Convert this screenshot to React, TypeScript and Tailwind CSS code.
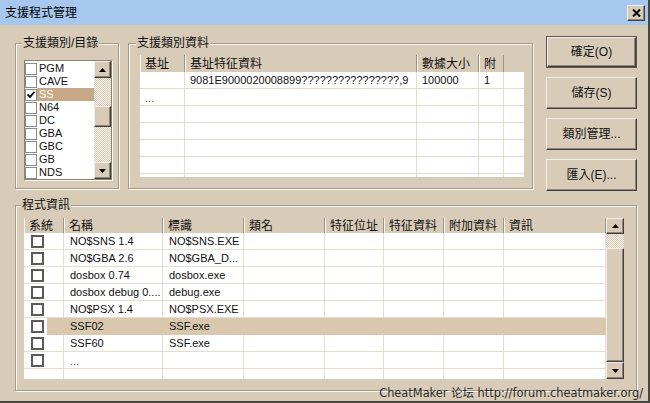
import React from "react";

const bevel =
  "bg-[#d8ccb8] border border-t-[#f4efe6] border-l-[#f4efe6] border-r-[#404040] border-b-[#404040] shadow-[inset_-1px_-1px_0_#8f8674]";
const checker =
  "bg-[image:repeating-conic-gradient(#f6f2ea_0_25%,#d8ccb8_0_50%)] bg-[length:2px_2px]";

const Arrow = ({ down }: { down?: boolean }) => (
  <svg width="7" height="4" viewBox="0 0 7 4">
    <path d={down ? "M0 0h7L3.5 4z" : "M3.5 0L7 4H0z"} fill="#000" />
  </svg>
);

const ScrollBtn = ({ down, h }: { down?: boolean; h: string }) => (
  <div className={`${h} shrink-0 flex items-center justify-center ${bevel}`}>
    <Arrow down={down} />
  </div>
);

const Group = ({
  title,
  className,
  legendClass,
  children,
}: {
  title: string;
  className: string;
  legendClass: string;
  children: React.ReactNode;
}) => (
  <fieldset
    className={`border border-[#a39a88] shadow-[inset_1px_1px_0_#fbf8f2,1px_1px_0_#fbf8f2] ${className}`}
  >
    <legend
      className={`px-[1px] text-[12px] leading-[15px] text-[#111] bg-[#d8ccb8] ${legendClass}`}
    >
      {title}
    </legend>
    {children}
  </fieldset>
);

const categories = ["PGM", "CAVE", "SS", "N64", "DC", "GBA", "GBC", "GB", "NDS"];

const t1Cols = ["w-[45px]", "w-[232px]", "w-[62px]", "w-[25px]", "flex-1"];
const t1Head = ["基址", "基址特征資料", "數據大小", "附", ""];
const t1Rows = [
  ["", "9081E9000020008899????????????????,9", "100000", "1", ""],
  ["...", "", "", "", ""],
  ["", "", "", "", ""],
  ["", "", "", "", ""],
  ["", "", "", "", ""],
  ["", "", "", "", ""],
];

const t2Cols = [
  "w-[40px]",
  "w-[99px]",
  "w-[81px]",
  "w-[81px]",
  "w-[59px]",
  "w-[60px]",
  "w-[60px]",
  "w-[102px]",
];
const t2Head = ["系統", "名稱", "標識", "類名", "特征位址", "特征資料", "附加資料", "資訊"];
const programs = [
  ["NO$SNS 1.4", "NO$SNS.EXE"],
  ["NO$GBA 2.6", "NO$GBA_D..."],
  ["dosbox 0.74", "dosbox.exe"],
  ["dosbox debug 0....", "debug.exe"],
  ["NO$PSX 1.4", "NO$PSX.EXE"],
  ["SSF02", "SSF.exe"],
  ["SSF60", "SSF.exe"],
  ["...", ""],
];

const HeadCell = ({ w, text, last }: { w: string; text: string; last?: boolean }) => (
  <div
    className={`${w} shrink-0 h-full flex items-center pl-[5px] text-[12px] ${
      last ? "" : "border-r border-[#9c9382] shadow-[inset_1px_0_0_#fbf8f2]"
    }`}
  >
    {text}
  </div>
);

export default function App() {
  return (
    <div className="w-[650px] h-[403px] bg-[#d8ccb8] relative overflow-hidden flex flex-col border-r-2 border-b-2 border-[#4a4640] font-['Liberation_Sans','Noto_Sans_CJK_TC',sans-serif] text-[#111]">
      {/* title bar */}
      <div className="h-[25px] shrink-0 bg-[#a7c8ee] flex items-center justify-between pl-[5px] pr-[3px]">
        <span className="text-[12px] text-black">支援程式管理</span>
        <div className={`w-[18px] h-[16px] flex items-center justify-center ${bevel}`}>
          <svg width="9" height="8" viewBox="0 0 9 8">
            <path d="M1 0.5L8 7.5M8 0.5L1 7.5" stroke="#000" strokeWidth="2" />
          </svg>
        </div>
      </div>

      <div className="flex-1 flex flex-col pl-[15px] pt-[11px]">
        <div className="flex items-start">
          {/* category list */}
          <Group title="支援類別/目錄" className="w-[104px] h-[153px]" legendClass="ml-[6px]">
            <div className="pl-[8px] pt-[9px]">
              <div className="w-[88px] h-[120px] bg-white border border-[#8b8270] shadow-[1px_1px_0_#fbf8f2] flex">
                <div className="flex-1 pt-[1px]">
                  {categories.map((c) => (
                    <div key={c} className="h-[13px] flex items-center">
                      <div className="w-[12px] h-[12px] border border-[#8a8a8a] bg-white flex items-center justify-center">
                        {c === "SS" && (
                          <svg width="8" height="7" viewBox="0 0 8 7">
                            <path d="M0.5 3.5L3 6L7.5 0.8" stroke="#000" strokeWidth="1.8" fill="none" />
                          </svg>
                        )}
                      </div>
                      <span
                        className={`flex-1 h-full flex items-center pl-[2px] text-[11px] ${
                          c === "SS" ? "bg-[#c8a886] text-white" : ""
                        }`}
                      >
                        {c}
                      </span>
                    </div>
                  ))}
                </div>
                <div className="w-[17px] flex flex-col">
                  <ScrollBtn h="h-[17px]" />
                  <div className={`h-[28px] ${checker}`} />
                  <div className={`h-[21px] ${bevel}`} />
                  <div className={`flex-1 ${checker}`} />
                  <ScrollBtn h="h-[17px]" down />
                </div>
              </div>
            </div>
          </Group>

          {/* category data */}
          <Group
            title="支援類別資料"
            className="ml-[9px] w-[405px] h-[153px]"
            legendClass="ml-[7px]"
          >
            <div className="pl-[11px] pt-[4px]">
              <div className="w-[384px] h-[122px] flex flex-col overflow-hidden">
                <div className="h-[17px] shrink-0 flex">
                  {t1Head.map((h, i) => (
                    <HeadCell key={i} w={t1Cols[i]} text={h} last={i >= 3 && h === ""} />
                  ))}
                </div>
                <div className="flex-1 bg-white">
                  {t1Rows.map((r, ri) => (
                    <div key={ri} className="h-[17px] flex">
                      {r.map((v, i) => (
                        <div
                          key={i}
                          className={`${t1Cols[i]} shrink-0 h-full flex items-center pl-[5px] text-[11px] border-b border-[#e2dccf] ${
                            i < 4 ? "border-r" : ""
                          } ${v === "..." ? "text-[#555] pt-[3px]" : ""}`}
                        >
                          {v}
                        </div>
                      ))}
                    </div>
                  ))}
                  <div className="h-[3px] flex">
                    {t1Cols.map((w, i) => (
                      <div key={i} className={`${w} shrink-0 ${i < 4 ? "border-r border-[#e2dccf]" : ""}`} />
                    ))}
                  </div>
                </div>
              </div>
            </div>
          </Group>

          {/* buttons */}
          <div className="ml-[13px] w-[91px] flex flex-col gap-[9px]">
            <div className="h-[32px] border border-[#5c574d] p-0">
              <div className={`h-full flex items-center justify-center text-[12px] ${bevel}`}>
                確定(O)
              </div>
            </div>
            {["儲存(S)", "類別管理...", "匯入(E)..."].map((b) => (
              <div key={b} className={`h-[32px] flex items-center justify-center text-[12px] ${bevel}`}>
                {b}
              </div>
            ))}
          </div>
        </div>

        {/* program info */}
        <Group title="程式資訊" className="mt-[7px] w-[622px] h-[193px]" legendClass="ml-[5px]">
          <div className="pl-[8px] pt-[5px]">
            <div className="w-[600px] h-[161px] flex">
              <div className="w-[582px] flex flex-col overflow-hidden">
                <div className="h-[15px] shrink-0 flex">
                  {t2Head.map((h, i) => (
                    <HeadCell key={i} w={t2Cols[i]} text={h} />
                  ))}
                </div>
                <div className="flex-1 bg-white">
                  {programs.map((p, ri) => {
                    const sel = p[0] === "SSF02";
                    return (
                      <div key={ri} className="h-[17px] flex">
                        {t2Cols.map((w, i) => (
                          <div
                            key={i}
                            className={`${w} shrink-0 h-full flex items-center text-[11px] ${
                              sel
                                ? i === 0
                                  ? "bg-[linear-gradient(to_right,#fff_23px,#dac8ae_23px)] pl-[7px]"
                                  : "bg-[#dac8ae] pl-[6px]"
                                : `border-r border-b border-[#e4ded2] ${i === 0 ? "pl-[7px]" : "pl-[6px]"}`
                            } ${p[0] === "..." && i === 1 ? "text-[#555] pt-[3px]" : ""}`}
                          >
                            {i === 0 && (
                              <div className="w-[13px] h-[13px] border-2 border-[#5a5a5a] bg-white" />
                            )}
                            {i === 1 && p[0]}
                            {i === 2 && p[1]}
                          </div>
                        ))}
                      </div>
                    );
                  })}
                  <div className="h-[10px] flex">
                    {t2Cols.map((w, i) => (
                      <div key={i} className={`${w} shrink-0 border-r border-[#e4ded2]`} />
                    ))}
                  </div>
                </div>
              </div>
              <div className="w-[18px] flex flex-col">
                <ScrollBtn h="h-[16px]" />
                <div className={`h-[14px] ${checker}`} />
                <div className={`flex-1 ${bevel}`} />
                <ScrollBtn h="h-[17px]" down />
              </div>
            </div>
          </div>
        </Group>
      </div>

      <div className="absolute right-[5px] bottom-[1px] text-[11.4px] leading-[14px] text-[#2b2b2b] font-['DejaVu_Sans','Noto_Sans_CJK_SC',sans-serif]">
        CheatMaker 论坛 http://forum.cheatmaker.org/
      </div>
    </div>
  );
}
